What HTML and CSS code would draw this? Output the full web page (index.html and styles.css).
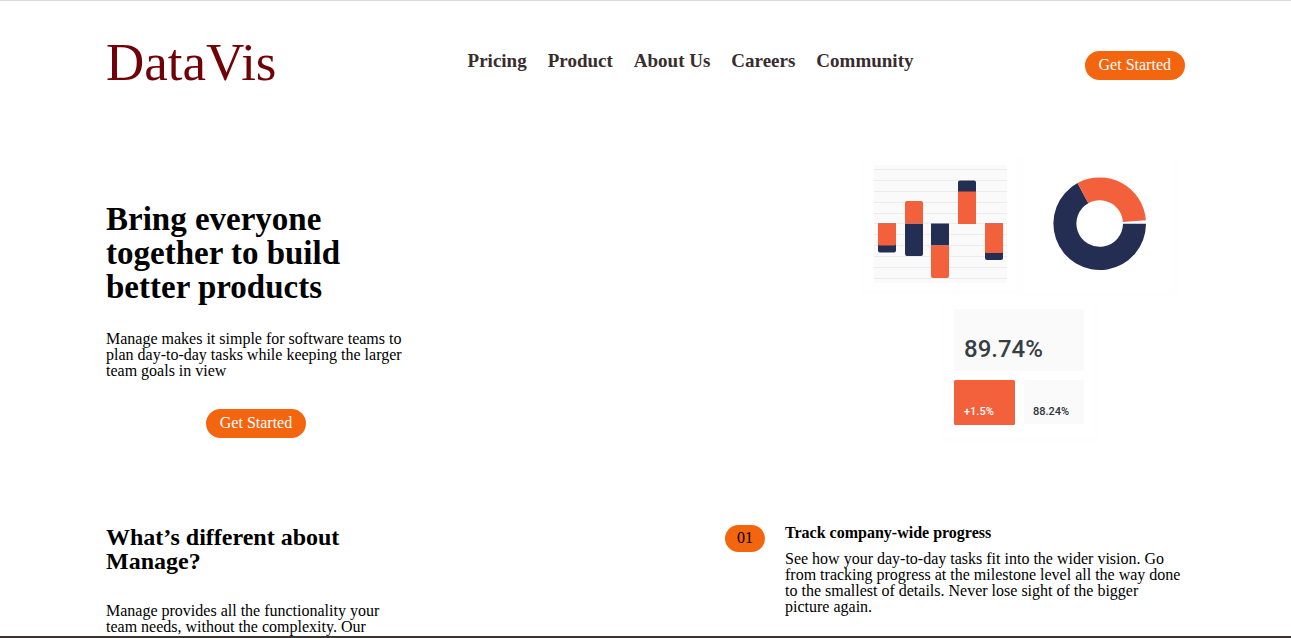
FILE: index.html
```html
<!DOCTYPE html>
<html lang="en">
<head>
<meta charset="utf-8">
<meta name="viewport" content="width=device-width, initial-scale=1">
<title>DataVis</title>
<link rel="stylesheet" href="styles.css">
</head>
<body>
<div class="page">
  <header class="header">
    <div class="logo">DataVis</div>
    <nav class="nav">
      <a href="#">Pricing</a>
      <a href="#">Product</a>
      <a href="#">About Us</a>
      <a href="#">Careers</a>
      <a href="#">Community</a>
    </nav>
    <button class="button" type="button">Get Started</button>
  </header>

  <main>
    <section class="hero">
      <div class="hero-text">
        <h1>Bring everyone together to build better products</h1>
        <p>Manage makes it simple for software teams to plan day-to-day tasks while keeping the larger team goals in view</p>
        <button class="button" type="button">Get Started</button>
      </div>
      <svg class="hero-art" viewBox="850 150 335 300" role="img" aria-label="Product charts">
        <!-- cards -->
        <g fill="#fefefe">
          <rect x="861" y="155" width="158" height="139" rx="4"/>
          <rect x="1019" y="155" width="160" height="142" rx="4"/>
          <rect x="940" y="300" width="158" height="142" rx="4"/>
        </g>
        <g fill="#fff">
          <rect x="864" y="156" width="152" height="134"/>
          <rect x="1023" y="156" width="151" height="134"/>
          <rect x="945" y="301" width="148" height="134"/>
        </g>
        <!-- bar chart -->
        <rect x="874" y="165" width="133" height="118" fill="#fafafa"/>
        <path d="M874 169.500h133M874 180.500h133M874 191.500h133M874 202.500h133M874 213.500h133M874 223.500h133M874 234.500h133M874 245.500h133M874 256.500h133M874 267.500h133M874 278.500h133" stroke="#ebeded"/>
        <path d="M878 223.500h18v27a2 2 0 0 1-2 2h-14a2 2 0 0 1-2-2zM905 223.500h18v30.500a2 2 0 0 1-2 2h-14a2 2 0 0 1-2-2zM931 223.500h18v22h-18zM958 192v-9.500a2 2 0 0 1 2-2h14a2 2 0 0 1 2 2v9.500zM985 223.500h18v34.500a2 2 0 0 1-2 2h-14a2 2 0 0 1-2-2z" fill="#242d52"/>
        <path d="M878 223.500h18v20.500a1.500 1.500 0 0 1-1.500 1.500h-15a1.500 1.500 0 0 1-1.500-1.500zM905 223.500v-20.500a2 2 0 0 1 2-2h14a2 2 0 0 1 2 2v20.500zM931 245.500h18v30.500a2 2 0 0 1-2 2h-14a2 2 0 0 1-2-2zM958 191.500h18v32.500h-18zM985 223.500h18v28a1.500 1.500 0 0 1-1.500 1.500h-15a1.500 1.500 0 0 1-1.500-1.500z" fill="#f3603c"/>
        <!-- donut -->
        <path d="M1146 223.800A46.300 46.300 0 1 1 1077.500 183.100L1088.300 203.200A23.300 23.300 0 1 0 1123 223.800Z" fill="#242d52"/>
        <path d="M1077.500 183.100A46.300 46.300 0 0 1 1145.900 220.300L1122.900 222A23.300 23.300 0 0 0 1088.300 203.200Z" fill="#f3603c"/>
        <!-- figures -->
        <rect x="954" y="309" width="130" height="62" rx="1" fill="#fafafa"/>
        <rect x="954" y="380" width="61" height="45" rx="1.500" fill="#f3603c"/>
        <rect x="1024" y="380" width="60" height="44" rx="1" fill="#fafafa"/>
        <text class="figure figure-large" x="964" y="357">89.74%</text>
        <text class="figure figure-light" x="964" y="415">+1.5%</text>
        <text class="figure" x="1033" y="415">88.24%</text>
      </svg>
    </section>

    <section class="features">
      <div class="intro">
        <h2>What’s different about Manage?</h2>
        <p>Manage provides all the functionality your team needs, without the complexity. Our</p>
      </div>
      <article class="feature">
        <span class="number">01</span>
        <div class="feature-text">
          <h3>Track company-wide progress</h3>
          <p>See how your day-to-day tasks fit into the wider vision. Go from tracking progress at the milestone level all the way done to the smallest of details. Never lose sight of the bigger picture again.</p>
        </div>
      </article>
    </section>
  </main>
</div>
</body>
</html>
```
FILE: styles.css
```css
* {
  box-sizing: border-box;
  margin: 0;
  padding: 0;
}

body {
  background: #fff;
  color: #000;
  font: 16px/16px "Liberation Serif", "Times New Roman", serif;
}

.page {
  display: flex;
  flex-direction: column;
  height: 100vh;
  padding: 0 106px;
  overflow: hidden;
  border-top: 1px solid #d9d9d9;
  border-bottom: 2px solid #3b3531;
}

.header {
  display: flex;
  align-items: center;
  justify-content: space-between;
  padding-top: 33px;
}

.logo {
  padding-bottom: 6px;
  color: #700207;
  font-size: 53px;
  line-height: 56px;
}

.nav {
  display: flex;
  flex-wrap: wrap;
  gap: 21px;
  padding: 0 0 8px 20px;
}

.nav a {
  color: #382d2e;
  font-size: 19px;
  font-weight: bold;
  line-height: 20px;
  text-decoration: none;
}

.button {
  padding: 6px 14px 7px;
  border: 0;
  border-radius: 16px;
  background: #f3650f;
  color: #fff;
  font: inherit;
}

.hero {
  display: flex;
  justify-content: space-between;
  margin-top: 54px;
}

.hero-text {
  display: flex;
  flex-direction: column;
  align-items: center;
  width: 300px;
  padding-top: 52px;
}

.hero-text p {
  margin: 27px 0 30px;
}

h1 {
  width: 100%;
  padding-right: 40px;
  font-size: 33px;
  line-height: 34px;
}

.hero-art {
  width: 335px;
}

.figure {
  fill: #2d3339;
  font: 500 11px Roboto, sans-serif;
}

.figure-large {
  fill: #373e44;
  font-size: 24px;
}

.figure-light {
  fill: #fff;
}

.features {
  display: flex;
  justify-content: space-between;
  margin-top: 75px;
}

.intro {
  display: flex;
  flex-direction: column;
  gap: 30px;
  width: 300px;
}

h2 {
  font-size: 24px;
  line-height: 24px;
}

.feature {
  display: flex;
  align-items: flex-start;
  gap: 20px;
  width: 460px;
}

.number {
  width: 40px;
  padding: 5px 0 6px;
  border-radius: 14px;
  background: #f3650f;
  text-align: center;
}

.feature-text {
  display: flex;
  flex: 1;
  flex-direction: column;
  gap: 10px;
}

h3 {
  font-size: 16px;
  line-height: 16px;
}
```
